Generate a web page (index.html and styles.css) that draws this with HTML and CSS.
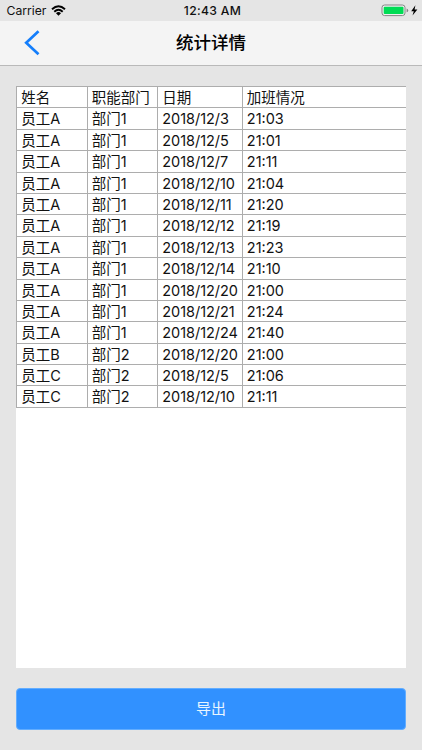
FILE: index.html
```html
<!DOCTYPE html>
<html lang="zh-CN">
<head>
<meta charset="utf-8">
<title>统计详情</title>
<link rel="stylesheet" href="styles.css">
</head>
<body>
<div class="status">
  <div class="carrier"><span>Carrier</span>
    <svg class="wifi" width="15" height="11" viewBox="0 0 15 11" fill="none" stroke="#000" stroke-width="1.9"><path d="M1 4.2Q7.5-1.8 14 4.2M3.3 6.7Q7.5 2.8 11.7 6.7"/><path d="M5 8.2Q7.5 6 10 8.2L7.5 10.7Z" fill="#000" stroke="none"/></svg>
  </div>
  <div class="time">12:43 AM</div>
  <div class="power">
    <svg width="37" height="13" viewBox="0 0 37 13"><rect x="1" y="1" width="23" height="10.6" rx="2.6" fill="#f1f1f1" stroke="#858585"/><rect x="2.7" y="2.7" width="19.8" height="7.2" rx="1" fill="#00dc54"/><path d="M25.6 4.5Q27.2 5 27.2 6.4T25.6 8.3Z" fill="#858585"/><path d="M34.4 1.2L30.2 7.2H32.8L31.5 11.6L36.4 5.6H33.6Z" fill="#000"/></svg>
  </div>
</div>
<header class="nav">
  <svg class="back" width="16" height="26" viewBox="0 0 16 26" fill="none" stroke="#147efb" stroke-width="2.7"><path d="M14.5 1.2L2.2 12.8L14.5 24.3"/></svg>
  <h1>统计详情</h1>
</header>
<main class="sheet">
  <div class="row"><span>姓名</span><span>职能部门</span><span>日期</span><span>加班情况</span></div>
  <div class="row"><span>员工A</span><span>部门1</span><span>2018/12/3</span><span>21:03</span></div>
  <div class="row"><span>员工A</span><span>部门1</span><span>2018/12/5</span><span>21:01</span></div>
  <div class="row"><span>员工A</span><span>部门1</span><span>2018/12/7</span><span>21:11</span></div>
  <div class="row"><span>员工A</span><span>部门1</span><span>2018/12/10</span><span>21:04</span></div>
  <div class="row"><span>员工A</span><span>部门1</span><span>2018/12/11</span><span>21:20</span></div>
  <div class="row"><span>员工A</span><span>部门1</span><span>2018/12/12</span><span>21:19</span></div>
  <div class="row"><span>员工A</span><span>部门1</span><span>2018/12/13</span><span>21:23</span></div>
  <div class="row"><span>员工A</span><span>部门1</span><span>2018/12/14</span><span>21:10</span></div>
  <div class="row"><span>员工A</span><span>部门1</span><span>2018/12/20</span><span>21:00</span></div>
  <div class="row"><span>员工A</span><span>部门1</span><span>2018/12/21</span><span>21:24</span></div>
  <div class="row"><span>员工A</span><span>部门1</span><span>2018/12/24</span><span>21:40</span></div>
  <div class="row"><span>员工B</span><span>部门2</span><span>2018/12/20</span><span>21:00</span></div>
  <div class="row"><span>员工C</span><span>部门2</span><span>2018/12/5</span><span>21:06</span></div>
  <div class="row last"><span>员工C</span><span>部门2</span><span>2018/12/10</span><span>21:11</span></div>
</main>
<button class="export">导出</button>
</body>
</html>
```
FILE: styles.css
```css
* { box-sizing: border-box; }
body {
  margin: 0;
  height: 750px;
  overflow: hidden;
  background: #e5e5e5;
  color: #111;
  font-family: Inter, "Noto Sans CJK SC", sans-serif;
}
.status {
  height: 21px;
  display: grid;
  grid-template-columns: 1fr auto 1fr;
  align-items: center;
  padding: 0 4.5px 0 6.5px;
  font-size: 12.2px;
  line-height: 21px;
}
.carrier { display: flex; align-items: center; gap: 4.5px; }
.time {
  padding-left: 1px;
  font-weight: 500;
  font-size: 12.2px;
  letter-spacing: 0.3px;
}
.power { display: flex; justify-content: flex-end; }
.nav {
  height: 45px;
  display: grid;
  grid-template-columns: 40px 1fr 40px;
  align-items: center;
  background: #f4f4f4;
  border-bottom: 1px solid #b9b9b9;
}
.back { justify-self: end; }
h1 {
  margin: 0;
  text-align: center;
  font-size: 17.5px;
  line-height: 44px;
  font-weight: 500;
  color: #000;
}
.sheet {
  margin: 20px 16px 0;
  height: 582px;
  background: #fff;
}
.row {
  height: 21.4px;
  display: grid;
  grid-template-columns: 70.5px 70.5px 84.5px 1fr;
  border-top: 1px solid #adadad;
  font-size: 14.5px;
  line-height: 21.2px;
}
.row span {
  height: 20.4px;
  border-left: 1px solid #adadad;
  padding-left: 4.3px;
  white-space: nowrap;
}
.row span:nth-child(3) { letter-spacing: -0.05px; }
.last { height: 22.4px; border-bottom: 1px solid #adadad; }
.export {
  display: block;
  width: 390px;
  height: 41.5px;
  margin: 20.4px 16px 0;
  padding: 0;
  border: 1px solid #62adff;
  border-radius: 4px;
  background: #3191ff;
  color: #e8f5ff;
  font: 15px/40px Inter, "Noto Sans CJK SC", sans-serif;
}
```
